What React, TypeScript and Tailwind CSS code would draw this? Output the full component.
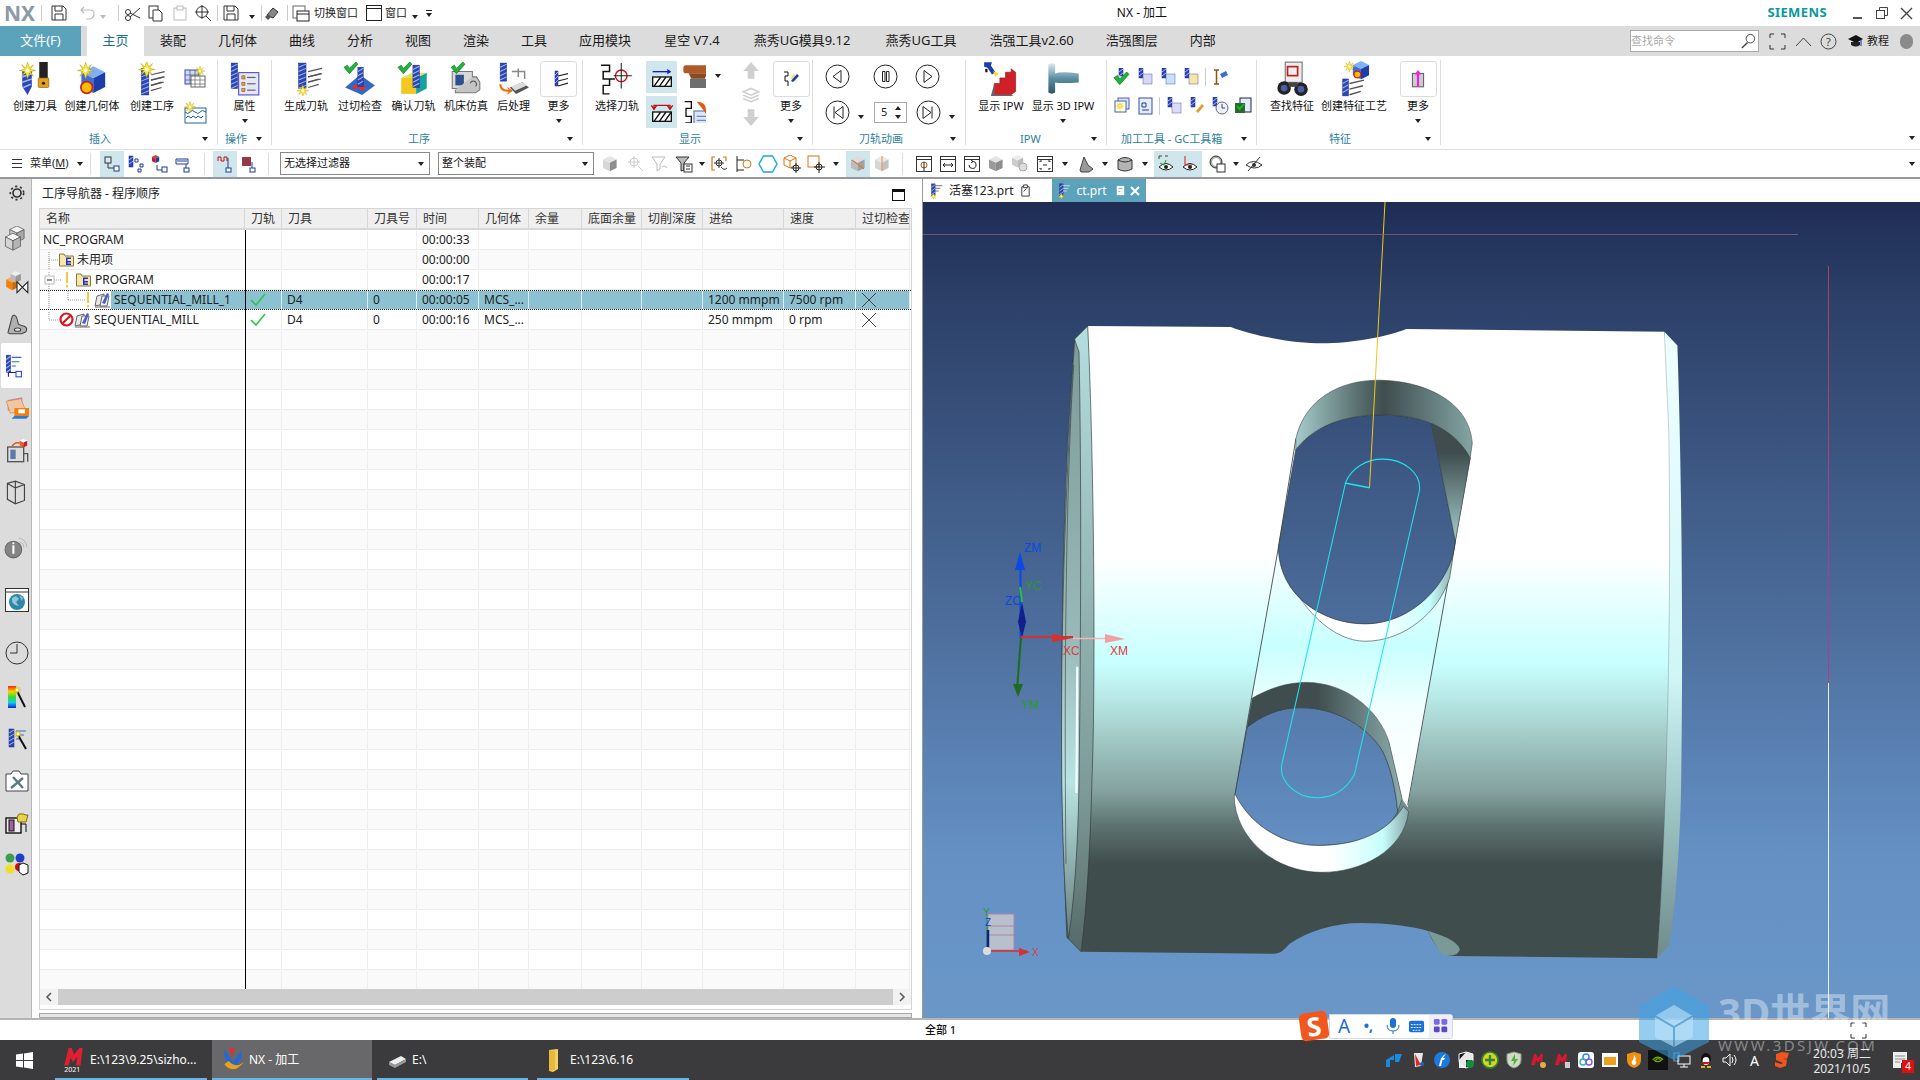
import type { ReactNode } from "react";

// shared bits for the little CAM icons
const S = ({ s = 18, vb = 18, children }: { s?: number; vb?: number; children: ReactNode }) => (
  <svg width={s} height={s} viewBox={`0 0 ${vb} ${vb}`} className="shrink-0">{children}</svg>
);
const Mill = ({ x = 0, y = 0, w = 6, h = 24 }) => (
  <g>
    <rect x={x} y={y} width={w} height={h} fill="#2c46b4" stroke="#1c2c80" strokeWidth=".5" />
    {Array.from({ length: Math.floor(h / 4) }).map((_, i) => (
      <line key={i} x1={x} y1={y + i * 4 + 4} x2={x + w} y2={y + i * 4 + 1} stroke="#9db8f2" strokeWidth="1" />
    ))}
  </g>
);
const Burst = ({ x = 0, y = 0, k = 1 }) => (
  <g transform={`translate(${x} ${y}) scale(${k})`}>
    <polygon points="0,-7 1.6,-2.2 5,-5 2.4,-1 7,0 2.4,1 5,5 1.6,2.2 0,7 -1.6,2.2 -5,5 -2.4,1 -7,0 -2.4,-1 -5,-5 -1.6,-2.2" fill="#ffe93a" stroke="#a89000" strokeWidth=".4" />
    <circle r="1.5" fill="#fff" />
  </g>
);
const Chk = ({ x = 0, y = 0, k = 1 }) => (
  <path transform={`translate(${x} ${y}) scale(${k})`} d="M0 5 L3 3 L5 6 L11 0 L13 2 L5 11 Z" fill="#1fb53a" stroke="#0a6a1c" strokeWidth=".6" />
);
const Rows = ({ x = 0, y = 0, c = "#555" }) => (
  <g stroke={c} strokeWidth="1.2" fill="none">
    <path d={`M${x} ${y + 3} L${x + 13} ${y}`} />
    <path d={`M${x} ${y + 8} L${x + 12} ${y + 5}`} />
    <path d={`M${x} ${y + 13} L${x + 10} ${y + 10}`} />
  </g>
);
const Cube = ({ x = 0, y = 0, k = 1, a = "#7fa8f0", b = "#3f63c8", c = "#1f3a98", st = "none" }) => (
  <g transform={`translate(${x} ${y}) scale(${k})`} stroke={st} strokeWidth=".8">
    <polygon points="0,4 8,0 16,4 8,8" fill={a} />
    <polygon points="0,4 8,8 8,18 0,14" fill={b} />
    <polygon points="16,4 8,8 8,18 16,14" fill={c} />
  </g>
);
const Win = ({ s = 18, children }: { s?: number; children?: ReactNode }) => (
  <S s={s}>
    <rect x="1.5" y="1.5" width="15" height="15" fill="#fff" stroke="#333" strokeWidth="1" />
    <line x1="1.5" y1="4.5" x2="16.5" y2="4.5" stroke="#333" />
    {children}
  </S>
);
const Grey = ({ c = "#b8b8b8" }: { c?: string }) => (
  <S><Cube x={2} y={1} k={.85} a="#e4e4e4" b={c} c="#8e8e8e" /></S>
);

// ribbon: big icons
const CreateTool = () => (
  <S s={34} vb={32}>
    <rect x="20" y="0" width="8" height="15" fill="#222" />
    <rect x="19" y="15" width="10" height="9" rx="1" fill="#e8a018" stroke="#6a4a00" strokeWidth=".5" />
    <circle cx="24" cy="20" r="1.5" fill="#222" />
    <path d="M4 8h9v15l-4 8-5-8z" fill="#2c46b4" />
    <path d="M4 14l9-3M4 19l9-3M5 24l7-3" stroke="#9db8f2" strokeWidth="1.5" />
    <Burst x={9} y={8} k={1.1} />
  </S>
);
const CreateGeo = () => (
  <S s={34} vb={32}>
    <Cube x={6} y={4} k={1.4} a="#7fb0f8" b="#3e6ed8" c="#1d3ea8" />
    <circle cx="11" cy="24" r="5.5" fill="#f5c000" stroke="#d02020" strokeWidth="1.6" />
    <Burst x={10} y={8} k={1.1} />
  </S>
);
const CreateOp = () => (
  <S s={34} vb={32}>
    <Mill x={6} y={6} w={7} h={25} />
    <Rows x={15} y={9} /><Rows x={15} y={14} />
    <Burst x={11} y={7} k={1.1} />
  </S>
);
const Props = () => (
  <S s={34} vb={32}>
    <Mill x={3} y={1} w={6} h={24} />
    <rect x="10" y="10" width="19" height="21" fill="#e6e6fb" stroke="#4a4ac8" />
    {[13, 19, 25].map((y) => (
      <g key={y}>
        <rect x="13" y={y} width="3" height="3" fill="#f0a000" stroke="#444" strokeWidth=".4" />
        <line x1="18" y1={y + 1.5} x2="26" y2={y + 1.5} stroke="#555" />
      </g>
    ))}
  </S>
);
const GenPath = () => (
  <S s={34} vb={32}>
    <Mill x={9} y={1} w={7} h={24} />
    <Rows x={18} y={6} /><Rows x={18} y={11} />
    <Burst x={13} y={27} k={.8} />
  </S>
);
const Gouge = () => (
  <S s={34} vb={32}>
    <path d="M2 24 L16 12 L30 22 L18 31 Z" fill="#3468c8" />
    <path d="M8 24 Q16 18 22 24 L18 27 Q14 23 11 26Z" fill="#e03030" />
    <Mill x={14} y={5} w={5} h={18} />
    <Chk x={1} y={0} k={1} />
  </S>
);
const Verify = () => (
  <S s={34} vb={32}>
    <polygon points="4,15 18,15 18,30 4,30" fill="#f0c820" />
    <polygon points="18,15 28,10 28,25 18,30" fill="#18a0a0" />
    <polygon points="4,15 14,10 28,10 18,15" fill="#e0e060" />
    <Mill x={15} y={3} w={6} h={21} />
    <Chk x={1} y={0} k={1} />
  </S>
);
const Machine = () => (
  <S s={34} vb={32}>
    <path d="M3 9 H22 V25 H3Z" fill="#d8d8d8" stroke="#777" />
    <rect x="6" y="12" width="8" height="10" fill="#2f4f8f" />
    <path d="M22 14h4l3 5v7l-4 3H6v-3" fill="#c4c4c4" stroke="#777" />
    <path d="M20 20a3 3 0 1 1 5 3" stroke="#555" fill="none" />
    <Chk x={2} y={0} k={1} />
  </S>
);
const Post = () => (
  <S s={34} vb={32}>
    <Mill x={3} y={1} w={6} h={17} />
    <path d="M14 9h12v7M20 6v8" stroke="#888" fill="none" strokeWidth="1.4" />
    <polygon points="12,24 24,19 30,24 18,30" fill="#555" />
    <polygon points="13,23 24,19 28,22 17,27" fill="#ddd" />
    <path d="M4 21 Q5 27 11 26 L9 23 L15 27 L9 31 L11 28 Q3 29 2 21Z" fill="#f06a10" />
  </S>
);
const MoreBox = ({ children }: { children: ReactNode }) => (
  <span className="flex h-[36px] w-[37px] items-center justify-center rounded-[3px] border border-[#dcdcdc]">{children}</span>
);
const SelPath = () => (
  <S s={34} vb={32}>
    <path d="M1 3H9V9H3V16H9V22H3V30H9M9 16H14" fill="none" stroke="#111" strokeWidth="1.4" />
    <circle cx="20" cy="13" r="5.5" fill="none" stroke="#d01010" strokeWidth="1.3" />
    <path d="M20 1V25M13 13H30" stroke="#222" strokeWidth="1" />
  </S>
);
const ShowIpw = () => (
  <S s={36} vb={32}>
    <path d="M2 10 h2 v-3 h-2z" fill="#111" />
    <path d="M1 1 L8 1 L7 4 L11 10 L8 12 L4 6 L1 5Z" fill="#1a3fa8" />
    <polygon points="9,9 14,11 11,14" fill="#ffd800" />
    <path d="M10 30V20h5v-5h5v-5h5v-3l4 3v17l-4 3Z" fill="#d02028" stroke="#7a1010" strokeWidth=".5" />
    <path d="M7 31 L10 20 V30 H25 L27 31Z" fill="#666" />
  </S>
);
const Show3d = () => (
  <S s={36} vb={32}>
    <path d="M3 3 Q6 1 9 3 V11 Q14 9 30 11 V19 Q14 20 9 19 V28 Q6 30 3 28 Z" fill="url(#steel)" />
    <defs>
      <linearGradient id="steel" x1="0" x2="0" y1="0" y2="1">
        <stop offset="0" stopColor="#dfe8ec" /><stop offset=".5" stopColor="#5b8fa2" /><stop offset="1" stopColor="#2e5566" />
      </linearGradient>
    </defs>
  </S>
);
const Binoc = () => (
  <S s={36} vb={32}>
    <rect x="10" y="1" width="15" height="18" fill="#eee" stroke="#777" />
    <rect x="12" y="5" width="9" height="8" fill="none" stroke="#c02020" strokeWidth="1.5" />
    <circle cx="9" cy="24" r="6" fill="#222" /><circle cx="24" cy="25" r="6" fill="#222" />
    <circle cx="9" cy="24" r="3" fill="#4a5ea8" /><circle cx="24" cy="25" r="3" fill="#4a5ea8" />
    <rect x="13" y="19" width="8" height="4" fill="#444" />
  </S>
);
const CreateFeat = () => (
  <S s={36} vb={32}>
    <Cube x={15} y={0} k={.9} a="#7fb0f8" b="#3e6ed8" c="#1d3ea8" />
    <circle cx="19" cy="12" r="3" fill="#f5c000" stroke="#d02020" />
    <Burst x={12} y={5} k={.7} />
    <Mill x={6} y={16} w={5} h={15} />
    <Rows x={12} y={17} />
  </S>
);

// ribbon: small icons
const MiniMill = ({ k = "#8a8ad8" }: { k?: string }) => (
  <S>
    <Mill x={3} y={0} w={4} h={10} />
    <rect x="7" y="6" width="9" height="10" fill={k} stroke="#5a5ab0" strokeWidth=".5" />
  </S>
);
const MiniChk = () => (
  <S><Mill x={6} y={0} w={4} h={8} /><Chk x={1} y={4} k={1.15} /></S>
);
const SmallGrid = () => (
  <S s={24} vb={24}>
    <rect x="2" y="5" width="14" height="14" fill="#cfd8f0" stroke="#3a4ea8" />
    <path d="M2 10h14M2 15h14M7 5v14M12 5v14" stroke="#3a4ea8" strokeWidth=".7" />
    <rect x="8" y="11" width="14" height="11" fill="#fff" stroke="#666" />
    <path d="M8 15h14M8 19h14M12 11v11M17 11v11" stroke="#666" strokeWidth=".7" />
    <Burst x={17} y={6} k={.7} />
  </S>
);
const SmallWave = () => (
  <S s={24} vb={24}>
    <rect x="2" y="8" width="21" height="15" fill="#fff" stroke="#23669a" />
    <path d="M2 12q3 3 5 0t5 0 5 0 6 0M3 18l2-2 3 2 2-2 3 2 2-2 3 2 2-2" stroke="#1a6090" fill="none" />
    <Burst x={7} y={7} k={.8} />
  </S>
);
const Anim = ({ d }: { d: ReactNode }) => (
  <S s={25} vb={25}>
    <circle cx="12.5" cy="12.5" r="11.5" fill="#fff" stroke="#222" />
    <g fill="none" stroke="#222">{d}</g>
  </S>
);
const Caret = ({ c = "border-t-[#222]" }: { c?: string }) => (
  <span className={`inline-block h-0 w-0 border-x-[3px] border-t-[4px] border-x-transparent ${c}`} />
);

const RBtn = ({ w, icon, label, more }: { w: string; icon: ReactNode; label: string; more?: boolean }) => (
  <div className={`flex ${w} shrink-0 flex-col items-center`}>
    <div className="flex h-[37px] items-center justify-center">{icon}</div>
    <div className="mt-[1px] text-[11px] leading-[16px] whitespace-nowrap text-[#111]">{label}</div>
    {more && <div className="mt-[3px] flex h-[8px] items-center"><Caret /></div>}
  </div>
);

const Group = ({ w, pad, label, lab, children }: { w: string; pad: string; label: string; lab: string; children: ReactNode }) => (
  <div className={`flex ${w} shrink-0 flex-col border-r border-[#dedede] h-[85px]`}>
    <div className={`flex h-[71px] shrink-0 ${pad}`}>{children}</div>
    <div className={`flex h-[16px] shrink-0 items-center text-[11px] leading-[16px] text-[#2d7f9e] ${lab}`}>
      <span className="whitespace-nowrap">{label}</span>
      <span className="ml-auto mr-[9px] flex items-center"><Caret /></span>
    </div>
  </div>
);

const Ribbon = () => (
  <div className="flex h-[94px] shrink-0 items-start bg-white pt-[4px] border-b border-[#dedede]">
    <Group w="w-[218px]" pad="pl-[8px]" label="插入" lab="pl-[89px]">
      <RBtn w="w-[54px]" icon={<CreateTool />} label="创建刀具" />
      <RBtn w="w-[60px]" icon={<CreateGeo />} label="创建几何体" />
      <RBtn w="w-[60px]" icon={<CreateOp />} label="创建工序" />
      <div className="flex w-[25px] flex-col items-center gap-[11px] pt-[5px]"><SmallGrid /><SmallWave /></div>
    </Group>
    <Group w="w-[54px]" pad="" label="操作" lab="pl-[7px]">
      <RBtn w="w-full" icon={<Props />} label="属性" more />
    </Group>
    <Group w="w-[311px]" pad="pl-[7px]" label="工序" lab="pl-[136px]">
      <RBtn w="w-[54px]" icon={<GenPath />} label="生成刀轨" />
      <RBtn w="w-[54px]" icon={<Gouge />} label="过切检查" />
      <RBtn w="w-[53px]" icon={<Verify />} label="确认刀轨" />
      <RBtn w="w-[52px]" icon={<Machine />} label="机床仿真" />
      <RBtn w="w-[43px]" icon={<Post />} label="后处理" />
      <RBtn w="w-[47px]" icon={<MoreBox><S><Mill x={5} y={1} w={3} h={15} /><Rows x={8} y={3} c="#222" /></S></MoreBox>} label="更多" more />
    </Group>
    <Group w="w-[230px]" pad="pl-[7px]" label="显示" lab="pl-[96px]">
      <RBtn w="w-[54px]" icon={<SelPath />} label="选择刀轨" />
      <div className="ml-[2px] flex w-[31px] shrink-0 flex-col gap-[3px] pt-[1px]">
        <span className="flex h-[32px] items-center justify-center bg-[#cfe6ec]"><S s={24}><path d="M2 5h13" stroke="#1a1ad0" strokeWidth="1" /><path d="M13 3l3 2-3 2z" fill="#1a1ad0" /><rect x="2" y="9" width="14" height="7" fill="#fff" stroke="#111" /><path d="M3 16l5-7M7 16l5-7M11 16l5-7" stroke="#111" /></S></span>
        <span className="flex h-[32px] items-center justify-center bg-[#cfe6ec]"><S s={24}><path d="M3 6V4h12v2M1 4l2 3 2-3M13 4l2 3 2-3" stroke="#c01010" fill="none" /><rect x="2" y="9" width="14" height="7" fill="#fff" stroke="#111" /><path d="M3 16l5-7M7 16l5-7M11 16l5-7" stroke="#111" /></S></span>
      </div>
      <div className="ml-[5px] flex w-[38px] shrink-0 flex-col pt-[4px]">
        <span className="flex items-center gap-[9px]"><S s={24}><rect x="1" y="1" width="22" height="6" rx="2" fill="#b05a28" /><path d="M5 7h14l-2 4H7z" fill="#8a4a20" /><rect x="6" y="11" width="12" height="9" fill="#6e6e6e" /><rect x="6" y="20" width="12" height="3" fill="#f0c800" /></S><Caret /></span>
        <span className="mt-[11px]"><S s={24}><path d="M2 2H7V7H3V13H7V18H3V23" fill="none" stroke="#111" /><rect x="9" y="9" width="12" height="14" fill="#dce6f6" stroke="#6a8ac0" /><path d="M11 13h8M11 16h8M11 19h8" stroke="#6a8ac0" /><path d="M11 2q7 0 7 6l2-2-2 5-3-4z" fill="#e05a10" /></S></span>
      </div>
      <div className="ml-[20px] flex w-[22px] shrink-0 flex-col items-center gap-[3px] pt-[1px]">
        <S s={20}><path d="M9 1l7 8h-4v7H6V9H2z" fill="#cfcfcf" /></S>
        <S s={20}><path d="M9 4l7 3-7 3-7-3zM2 10l7 3 7-3M2 13l7 3 7-3" fill="none" stroke="#cfcfcf" strokeWidth="1.4" /></S>
        <S s={20}><path d="M9 17l7-8h-4V2H6v7H2z" fill="#cfcfcf" /></S>
      </div>
      <div className="ml-[7px] shrink-0"><RBtn w="w-[44px]" icon={<MoreBox><S><path d="M2 2H6V6H3V11H6V16" fill="none" stroke="#111" /><Burst x={12} y={8} k={.5} /><path d="M9 11 L15 4 L17 6 L11 12Z" fill="#1a3fa8" /></S></MoreBox>} label="更多" more /></div>
    </Group>
    <Group w="w-[153px]" pad="pl-[12px]" label="刀轨动画" lab="pl-[46px]">
      <div className="flex w-full flex-col gap-[11px] pt-[4px]">
        <div className="flex items-center">
          <Anim d={<path d="M16 6.5 L8 12.5 L16 18.5Z" />} />
          <span className="ml-[23px]"><Anim d={<path d="M9.5 7.5H12V17.5H9.5ZM13.5 7.5H16V17.5H13.5Z" />} /></span>
          <span className="ml-[17px]"><Anim d={<path d="M9 6.5 L17 12.5 L9 18.5Z" />} /></span>
        </div>
        <div className="flex items-center">
          <Anim d={<path d="M9 6.5V18.5M18 6.5 L10 12.5 L18 18.5Z" />} />
          <span className="ml-[8px] mr-[10px]"><Caret /></span>
          <span className="flex h-[21px] w-[33px] items-center justify-between border border-[#aaa] pl-[6px] pr-[5px] text-[11px]">5<span className="flex flex-col gap-[5px]"><span className="block h-0 w-0 border-x-[3px] border-b-[4px] border-x-transparent border-b-[#222]" /><Caret /></span></span>
          <span className="ml-[9px]"><Anim d={<path d="M16 6.5V18.5M7 6.5 L15 12.5 L7 18.5Z" />} /></span>
          <span className="ml-[8px]"><Caret /></span>
        </div>
      </div>
    </Group>
    <Group w="w-[141px]" pad="pl-[11px]" label="IPW" lab="pl-[54px]">
      <RBtn w="w-[48px]" icon={<ShowIpw />} label="显示 IPW" />
      <RBtn w="w-[76px]" icon={<Show3d />} label="显示 3D IPW" more />
    </Group>
    <Group w="w-[150px]" pad="pl-[6px]" label="加工工具 - GC工具箱" lab="pl-[14px]">
      <div className="flex w-full flex-col gap-[11px] pt-[8px]">
        <div className="flex items-center gap-[5px]">
          <MiniChk /><MiniMill k="#d8d8f4" /><MiniMill k="#c8e0f8" /><MiniMill k="#f2e8a8" />
          <span className="h-[18px] w-px bg-[#ccc]" />
          <S><path d="M3 2h5M3 16h5M5.5 2v14" stroke="#8a5a10" strokeWidth="1.5" /><path d="M9 6l6-3 2 4-6 3z" fill="#3e6ed8" /></S>
        </div>
        <div className="flex items-center gap-[5px]">
          <S><rect x="5" y="1" width="11" height="11" fill="#dce6f6" stroke="#4a5ec0" /><rect x="2" y="4" width="11" height="11" fill="#ffffd0" stroke="#4a5ec0" /><Burst x={7} y={9} k={.5} /></S>
          <S><rect x="3" y="1" width="13" height="16" fill="#e6eefa" stroke="#3a4ea8" /><path d="M6 6h4v4H6zM6 13h7" stroke="#1f3a98" fill="none" /></S>
          <span className="h-[18px] w-px bg-[#ccc]" />
          <MiniMill k="#dcdcf6" />
          <S><Mill x={3} y={0} w={4} h={10} /><path d="M8 14l6-7 2 2-6 7z" fill="#e0a020" /></S>
          <S><Mill x={2} y={0} w={4} h={9} /><circle cx="11" cy="11" r="6" fill="#eef" stroke="#667" /><path d="M11 7v4h3" stroke="#445" fill="none" /></S>
          <S><rect x="6" y="1" width="11" height="14" fill="#e0ecfa" stroke="#224" /><rect x="1" y="6" width="10" height="10" fill="#2a6a30" /><Chk x={2} y={6} k={.7} /></S>
        </div>
      </div>
    </Group>
    <Group w="w-[184px]" pad="pl-[8px]" label="特征" lab="pl-[72px]">
      <RBtn w="w-[54px]" icon={<Binoc />} label="查找特征" />
      <RBtn w="w-[70px]" icon={<CreateFeat />} label="创建特征工艺" />
      <div className="ml-[10px]"><RBtn w="w-[38px]" icon={<MoreBox><S s={20}><rect x="4" y="4" width="10" height="12" fill="#ccc" stroke="#666" /><path d="M9 1l3 4h-2v11H8V5H6z" fill="#f020e0" /></S></MoreBox>} label="更多" more /></div>
    </Group>
    <div className="ml-auto flex h-[85px] items-end pb-[5px] pr-[5px]"><Caret /></div>
  </div>
);

const tabs = [
  { t: "装配", c: "px-[16px]" }, { t: "几何体", c: "px-[16px]" }, { t: "曲线", c: "px-[16px]" }, { t: "分析", c: "px-[16px]" },
  { t: "视图", c: "px-[16px]" }, { t: "渲染", c: "px-[16px]" }, { t: "工具", c: "px-[16px]" }, { t: "应用模块", c: "px-[16px]" },
  { t: "星空 V7.4", c: "pl-[17px] pr-[16px]" }, { t: "燕秀UG模具9.12", c: "px-[18px]" }, { t: "燕秀UG工具", c: "px-[17px]" },
  { t: "浩强工具v2.60", c: "px-[16px]" }, { t: "浩强图层", c: "px-[16px]" }, { t: "内部", c: "px-[16px]" },
];

const TitleBar = () => (
  <div className="flex h-[26px] shrink-0 items-center bg-white">
    <span className="ml-[4px] w-[34px] text-[21px] leading-[26px] font-bold text-[#8b9aa8]">NX</span>
    <span className="mx-[3px] h-[16px] w-px bg-[#ccc]" />
    <span className="ml-[5px]"><S><path d="M2 2H13L16 5V16H2Z" fill="none" stroke="#333" /><path d="M5 2V7H12V2M5 16V10H13V16" fill="none" stroke="#333" /></S></span>
    <span className="ml-[11px]"><S><path d="M5 3L2 6 5 9M2 6H11Q15 6 15 10T11 15H7" fill="none" stroke="#bbb" strokeWidth="1.2" /></S></span>
    <span className="ml-[3px]"><Caret c="border-t-[#bbb]" /></span>
    <span className="ml-[12px] mr-[5px] h-[16px] w-px bg-[#ccc]" />
    <S><circle cx="4" cy="14" r="2.5" fill="none" stroke="#333" /><circle cx="4" cy="8" r="2.5" fill="none" stroke="#333" /><path d="M6 13L16 4M6 9L16 14" stroke="#333" /></S>
    <span className="ml-[5px]"><S><rect x="2" y="2" width="9" height="12" fill="#fff" stroke="#333" /><path d="M6 6h6l3 3v8H6z" fill="#fff" stroke="#333" /></S></span>
    <span className="ml-[6px]"><S><rect x="3" y="4" width="12" height="12" fill="none" stroke="#bbb" /><rect x="6" y="2" width="6" height="4" fill="#fff" stroke="#bbb" /></S></span>
    <span className="ml-[5px]"><S><circle cx="8" cy="8" r="5.5" fill="none" stroke="#333" /><path d="M8 1v14M1 8h14M12 12l5 5" stroke="#333" /></S></span>
    <span className="ml-[5px] mr-[4px] h-[16px] w-px bg-[#ccc]" />
    <S><path d="M2 2H13L16 5V16H2Z" fill="none" stroke="#333" /><path d="M5 2V7H12V2M5 16V10H13V16" fill="none" stroke="#333" /></S>
    <span className="ml-[9px]"><Caret /></span>
    <span className="ml-[6px] mr-[2px] h-[16px] w-px bg-[#ccc]" />
    <S><path d="M3 11l6-7 5 4-5 6z" fill="#888" stroke="#333" /><path d="M1 13l3-3 3 3-3 3z" fill="#555" /></S>
    <span className="ml-[5px] mr-[4px] h-[16px] w-px bg-[#ccc]" />
    <S><rect x="1" y="2" width="12" height="12" fill="#fff" stroke="#666" /><rect x="5" y="7" width="12" height="10" fill="#fff" stroke="#222" /><line x1="5" y1="10" x2="17" y2="10" stroke="#222" /></S>
    <span className="ml-[4px] text-[11px] whitespace-nowrap">切换窗口</span>
    <span className="ml-[7px]"><S><rect x="1.5" y="1.5" width="15" height="15" fill="#fff" stroke="#222" /><line x1="1.5" y1="4.5" x2="16.5" y2="4.5" stroke="#222" /></S></span>
    <span className="ml-[2px] text-[11px] whitespace-nowrap">窗口</span>
    <span className="ml-[5px]"><Caret /></span>
    <span className="ml-[8px] flex flex-col gap-[2px]"><span className="h-px w-[6px] bg-[#222]" /><Caret /></span>
    <span className="ml-[650px] w-[120px] text-center text-[12px] whitespace-nowrap text-[#111]">NX - 加工</span>
    <span className="ml-auto text-[13px] font-bold tracking-[.4px] text-[#0a9a9a]">SIEMENS</span>
    <span className="ml-[26px] mt-[10px] h-[2px] w-[9px] bg-[#555]" />
    <span className="ml-[13px]"><S s={14} vb={14}><rect x="1.5" y="4.5" width="8" height="8" fill="none" stroke="#444" /><path d="M4.5 4.5V1.5H12.5V9.5H9.5" fill="none" stroke="#444" /></S></span>
    <span className="ml-[10px] mr-[6px]"><S s={15} vb={15}><path d="M2 2L13 13M13 2L2 13" stroke="#444" strokeWidth="1.4" /></S></span>
  </div>
);

const TabBar = () => (
  <div className="flex h-[30px] shrink-0 items-center bg-[#dcdcdc] text-[13px] text-[#1a1a1a]">
    <div className="flex h-full w-[81px] items-center justify-center bg-[#5ba3bb] text-white">文件(F)</div>
    <div className="ml-[6px] flex h-full w-[57px] items-center justify-center bg-white text-[#1a6f8c]">主页</div>
    {tabs.map((t) => <div key={t.t} className={`${t.c} whitespace-nowrap`}>{t.t}</div>)}
    <div className="ml-auto flex h-[22px] w-[129px] items-center border border-[#aaa] bg-white text-[11px] text-[#aaa]">
      <span className="flex-1">查找命令</span>
      <span className="pr-[1px]"><S s={17}><circle cx="11" cy="6" r="4.5" fill="none" stroke="#444" /><path d="M8 10L2 16" stroke="#444" strokeWidth="1.5" /></S></span>
    </div>
    <span className="ml-[10px]"><S s={17} vb={17}><path d="M1 5V1H5M12 1H16V5M16 12V16H12M5 16H1V12" fill="none" stroke="#333" /></S></span>
    <span className="ml-[9px]"><S s={17} vb={17}><path d="M1 13L8.5 5 16 13" fill="none" stroke="#444" /></S></span>
    <span className="ml-[8px]"><S s={17} vb={17}><circle cx="8.5" cy="8.5" r="7.5" fill="none" stroke="#444" /><text x="8.5" y="12.5" fontSize="11" textAnchor="middle" fill="#444">?</text></S></span>
    <span className="ml-[10px]"><S s={17} vb={17}><path d="M1 6L9 2 16 6 9 10Z" fill="#111" /><path d="M4 9V12Q9 15 13 12V9" fill="#222" /><path d="M14 7V13" stroke="#1a2fd0" /></S></span>
    <span className="ml-[3px] text-[11px]">教程</span>
    <span className="ml-[11px] mr-[7px] h-[15px] w-[13px] rounded-full bg-[#8a8a8a]" />
  </div>
);

const Hl = ({ children, on }: { children: ReactNode; on?: boolean }) => (
  <span className={`flex h-[26px] w-[24px] shrink-0 items-center justify-center ${on ? "bg-[#cfe6ec]" : ""}`}>{children}</span>
);
const Vs = () => <span className="mx-[7px] h-[22px] w-px shrink-0 bg-[#dcdcdc]" />;
const Tc = () => <span className="flex w-[16px] shrink-0 justify-center"><Caret /></span>;
const Tree = ({ a = "#333", b = "#1f3a98" }: { a?: string; b?: string }) => (
  <S><path d="M5 8v5h7" fill="none" stroke="#333" /><rect x="2" y="2" width="6" height="6" fill="#dbe5fa" stroke={a} /><rect x="11" y="11" width="5" height="5" fill="#fff" stroke={b} /></S>
);
const Select = ({ w, label }: { w: string; label: string }) => (
  <div className={`flex h-[23px] ${w} shrink-0 items-center justify-between border border-[#888] pl-[3px] pr-[5px] text-[11px] text-[#111]`}>
    <span>{label}</span><Caret />
  </div>
);

const ToolBar = () => (
  <div className="flex h-[29px] shrink-0 items-center border-b-2 border-[#96999c] bg-white pl-[12px]">
    <span className="flex w-[10px] flex-col gap-[3px]"><span className="h-px bg-[#333]" /><span className="h-px bg-[#333]" /><span className="h-px bg-[#333]" /></span>
    <span className="ml-[8px] w-[42px] text-[11px] whitespace-nowrap">菜单(<span className="underline">M</span>)</span>
    <span className="ml-[5px] flex"><Caret /></span>
    <span className="ml-[7px] mr-[9px] h-[22px] w-px bg-[#dcdcdc]" />
    <Hl on><Tree /></Hl><Hl><S><Mill x={2} y={1} w={4} h={11} /><path d="M8 4h3v3H8zM13 9h3v3h-3zM11 14h3v3h-3z" fill="#fff" stroke="#1f3a98" /></S></Hl>
    <Hl><S><Cube x={1} y={0} k={.45} a="#d04040" b="#c02020" c="#1d3ea8" /><path d="M6 10v5h5" fill="none" stroke="#1f3a98" /><rect x="11" y="12" width="5" height="5" fill="#fff" stroke="#1f3a98" /></S></Hl>
    <Hl><S><path d="M1 4h12v5H1z" fill="none" stroke="#1f3a98" /><path d="M2 6h10" stroke="#1f3a98" /><path d="M11 9v6" stroke="#1f3a98" /><rect x="9" y="13" width="5" height="4" fill="#fff" stroke="#1f3a98" /></S></Hl>
    <span className="ml-[8px] mr-[8px] h-[22px] w-px shrink-0 bg-[#dcdcdc]" />
    <Hl on><S><path d="M2 6V2h3v4h3V2h3v4" fill="none" stroke="#c01010" /><path d="M12 3v11" stroke="#1f3a98" /><rect x="10" y="13" width="5" height="4" fill="#fff" stroke="#1f3a98" /></S></Hl>
    <Hl><S><rect x="2" y="2" width="9" height="9" fill="#a83040" /><path d="M2 5h9M2 8h9M5 2v9M8 2v9" stroke="#555" strokeWidth=".5" /><path d="M12 7v8" stroke="#1f3a98" /><rect x="10" y="13" width="5" height="4" fill="#fff" stroke="#1f3a98" /></S></Hl>
    <Vs />
    <span className="ml-[4px]"><Select w="w-[150px]" label="无选择过滤器" /></span>
    <span className="ml-[8px]"><Select w="w-[156px]" label="整个装配" /></span>
    <span className="ml-[4px] flex items-center">
      <Hl><Grey c="#d8d8d8" /></Hl>
      <span className="w-[2px]" />
      <Hl><S><circle cx="7" cy="7" r="4" fill="none" stroke="#ccc" /><path d="M7 1v12M1 7h12M11 11l5 5" stroke="#ccc" /></S></Hl>
      <Hl><S><path d="M1 2h13L9 9v5l-3 2V9z" fill="none" stroke="#bbb" /><path d="M11 12a3 3 0 0 1 5 1" stroke="#bbb" fill="none" /></S></Hl>
      <Hl><S><path d="M1 2h13L9 8v7l-3 1V8z" fill="#bbb" stroke="#333" /><rect x="9" y="9" width="8" height="8" fill="#fff" stroke="#333" /><path d="M11 11h4M11 14h4" stroke="#333" /></S></Hl>
      <span className="flex w-[12px] shrink-0 justify-center"><Caret /></span>
      <Hl><S><path d="M4 2H1V15H4M12 2H15V6" fill="none" stroke="#e07010" strokeWidth="1.2" /><circle cx="8" cy="8" r="3" fill="none" stroke="#333" /><path d="M8 3v10M3 8h10M10 12q3 4 6 1" stroke="#333" fill="none" /></S></Hl>
      <Hl><S><path d="M2 1v16M2 5h7M2 15h7" stroke="#222" /><circle cx="12" cy="9" r="4" fill="none" stroke="#e07010" /></S></Hl>
      <Hl><S s={20} vb={20}><polygon points="5.5,2 14.5,2 19,10 14.5,18 5.5,18 1,10" fill="none" stroke="#1aa8d8" strokeWidth="1.4" /></S></Hl>
      <Hl><S><Cube x={1} y={0} k={.7} a="#fff" b="#fff" c="#fff" /><path d="M1 3L7 0l6 3v7l-6 3-6-3zM7 6v7M1 3l6 3 6-3" fill="none" stroke="#e07010" /><circle cx="13" cy="13" r="3" fill="none" stroke="#222" /><path d="M13 8v10M8 13h10" stroke="#222" /></S></Hl>
      <Hl><S><rect x="1" y="1" width="11" height="11" fill="none" stroke="#e07010" /><circle cx="12" cy="12" r="3" fill="none" stroke="#222" /><path d="M12 7v11M7 12h11" stroke="#222" /></S></Hl>
      <Tc />
      <span className="w-[2px]" />
      <Hl on><S><Cube x={2} y={1} k={.85} a="#dcdcdc" b="#bcbcbc" c="#a0a0a0" /><path d="M3 5L15 14" stroke="#e07010" /></S></Hl>
      <Hl><S><Cube x={2} y={1} k={.85} a="#e8e8e8" b="#d6d6d6" c="#c2c2c2" /><path d="M9 1v15" stroke="#e89050" /></S></Hl>
      <span className="ml-[8px] mr-[9px] h-[22px] w-px bg-[#dcdcdc]" />
      <Hl><Win><circle cx="9" cy="10" r="3" fill="none" stroke="#c05010" /><path d="M9 7v9" stroke="#222" /></Win></Hl>
      <Hl><Win><path d="M4 10h10M4 10l2-2M4 10l2 2M14 10l-2-2M14 10l-2 2" stroke="#222" fill="none" /></Win></Hl>
      <Hl><Win><path d="M6 10a3.5 3.5 0 1 0 3-3.5M8 5l2 1.5L8 8" fill="none" stroke="#222" /></Win></Hl>
      <Hl><Grey c="#9a9a9a" /></Hl>
      <Hl><S><Cube x={1} y={0} k={.7} a="#eee" b="#ccc" c="#bbb" /><circle cx="12" cy="12" r="4" fill="#ddd" stroke="#aaa" /></S></Hl>
      <span className="w-[1px]" />
      <Hl><Win><path d="M4 7V6h2M14 7V6h-2M4 13v1h2M14 13v1h-2M7 10h4" stroke="#222" fill="none" /></Win></Hl>
      <Tc />
      <Hl><S><path d="M4 15L8 2l4 8 5 4-4 3H5z" fill="#999" stroke="#444" /></S></Hl>
      <Tc />
      <Hl><S><path d="M2 5Q9 0 16 5V14Q9 18 2 14Z" fill="#b4b4b4" stroke="#333" /><path d="M2 5Q9 9 16 5" fill="none" stroke="#333" /></S></Hl>
      <Tc />
      <span className="w-[1px]" />
      <Hl on><S><path d="M2 4V1h3M8 1h3" stroke="#444" fill="none" /><path d="M2 12q7-7 14 0q-7 6-14 0" fill="#fff" stroke="#222" /><circle cx="9" cy="12" r="2" fill="#222" /><path d="M3 8l4 2 2-5" stroke="#1aa030" fill="none" /></S></Hl>
      <Hl on><S><path d="M2 12q7-7 14 0q-7 6-14 0" fill="#fff" stroke="#222" /><circle cx="9" cy="12" r="2" fill="#222" /><path d="M4 1v9h7" stroke="#d02020" fill="none" /></S></Hl>
      <span className="w-[3px]" />
      <Hl><S><circle cx="8" cy="7" r="6" fill="#aaa" stroke="#333" /><path d="M8 3a4 4 0 1 0 .1 0" fill="#fff" /><rect x="9" y="9" width="8" height="8" fill="#fff" stroke="#333" /></S></Hl>
      <span className="flex w-[13px] shrink-0 justify-center"><Caret /></span>
      <Hl><S><path d="M3 16L15 2" stroke="#333" /><path d="M1 10q7-7 16 0q-7 6-16 0" fill="none" stroke="#333" /><circle cx="9" cy="10" r="2" fill="#333" /></S></Hl>
    </span>
    <span className="ml-auto mr-[5px] flex"><Caret /></span>
  </div>
);

const railTop = [
  { mt: "mt-[4px]", i: <S s={20}><circle cx="9" cy="9" r="3.6" fill="none" stroke="#333" strokeWidth="1.5" /><circle cx="9" cy="9" r="6" fill="none" stroke="#333" strokeWidth="1.5" strokeDasharray="2 2.4" /></S> },
  { mt: "mt-[23px]", i: <S s={26}><Cube x={4} y={0} k={.62} a="#f4f4f4" b="#c8c8c8" c="#a8a8a8" st="#555" /><Cube x={1} y={5} k={.65} a="#f4f4f4" b="#d4d4d4" c="#b4b4b4" st="#555" /></S> },
  { mt: "mt-[18px]", i: <S s={26} vb={24}><Cube x={2} y={6} k={.7} a="#ffa84a" b="#f08010" c="#d06a00" /><Cube x={6} y={1} k={.6} a="#eee" b="#bbb" c="#999" /><path d="M12 11l10 10V11L12 21Z" fill="#fff" stroke="#222" /></S> },
  { mt: "mt-[17px]", i: <S s={25} vb={24}><path d="M4 18L8 3q2-2 4 1l2 7 6 2q3 2 1 5l-4 2H6q-3-1-2-2z" fill="#b0b0b0" stroke="#444" /><ellipse cx="13" cy="16" rx="3" ry="1.6" fill="#eee" stroke="#444" /></S> },
];
const railBottom = [
  { mt: "mt-[8px]", i: <S s={24}><path d="M2 3l11-2v8l-11 2z" fill="#b08ad8" /><path d="M1 4l11-2 3 8-11 3z" fill="#f0c8a0" stroke="#e0802a" strokeWidth=".5" /><rect x="7" y="9" width="11" height="6" fill="#f08010" /><rect x="10" y="10" width="5" height="3" fill="#fff" /><path d="M7 15h11l-2 2H5z" fill="#2b7ad8" /></S> },
  { mt: "mt-[19px]", i: <S s={24}><rect x="2" y="6" width="12" height="11" fill="#ddd" stroke="#555" /><rect x="4" y="8" width="4" height="7" fill="#5a7ab0" /><path d="M14 11h3v6" stroke="#555" fill="none" /><Cube x={11} y={0} k={.35} a="#fff" b="#f05a20" c="#c02020" /><path d="M5 6q2-4 6-3" stroke="#e05a10" fill="none" /></S> },
  { mt: "mt-[17px]", i: <S s={25} vb={22}><path d="M3 3l7-2 8 3v14l-8 3-7-4zM10 1v6M10 21V7l8-3M3 3l7 4" fill="none" stroke="#444" /></S> },
  { mt: "mt-[31px]", i: <S s={25} vb={24}><path d="M14 2a9 9 0 0 1 8 9M15 6a5 5 0 0 1 4 5" stroke="#bbb" fill="none" /><circle cx="9" cy="13" r="8" fill="#858585" stroke="#666" /><path d="M9 9v8" stroke="#fff" strokeWidth="2" /><circle cx="9" cy="7" r="1" fill="#fff" /></S> },
  { mt: "mt-[27px]", i: <S s={24} vb={24}><rect x="0.5" y="0.5" width="23" height="23" fill="#fff" stroke="#333" /><line x1="0.5" y1="4" x2="23.5" y2="4" stroke="#333" /><circle cx="12" cy="14" r="8" fill="#2e86a8" /><path d="M7 10l4-2 3 3-3 3 3 4-4-1-3-3zM14 7l4 3-1 3z" fill="#8cc8d8" /></S> },
  { mt: "mt-[29px]", i: <S s={24} vb={24}><circle cx="12" cy="12" r="11" fill="none" stroke="#333" /><path d="M12 3v9H5" fill="none" stroke="#333" /></S> },
  { mt: "mt-[20px]", i: <S s={24} vb={24}><defs><linearGradient id="rb" x1="0" x2="0" y1="0" y2="1"><stop offset="0" stopColor="#ff2010" /><stop offset=".25" stopColor="#ffd000" /><stop offset=".5" stopColor="#30e030" /><stop offset=".75" stopColor="#10d0e0" /><stop offset="1" stopColor="#1020e0" /></linearGradient></defs><rect x="3" y="1" width="8" height="22" fill="url(#rb)" /><path d="M12 6l8 16" stroke="#111" strokeWidth="2" /><Burst x={12} y={5} k={.6} /></S> },
  { mt: "mt-[18px]", i: <S s={24} vb={24}><Mill x={4} y={2} w={5} h={18} /><path d="M11 4h10M11 8h8M11 12h5" stroke="#2b6ad8" /><path d="M13 8l8 14" stroke="#111" strokeWidth="2" /><Burst x={13} y={7} k={.6} /></S> },
  { mt: "mt-[18px]", i: <S s={24} vb={24}><path d="M1 5h5l2-3h6l2 3h7v17H1z" fill="#fff" stroke="#444" /><path d="M6 19L18 9M8 8l10 11" stroke="#5a7a80" strokeWidth="2.4" /></S> },
  { mt: "mt-[18px]", i: <S s={24} vb={24}><rect x="1" y="7" width="15" height="15" fill="#eee" stroke="#111" strokeWidth="1.4" /><rect x="4" y="9" width="5" height="11" fill="#a060a0" stroke="#111" /><path d="M16 13h5v8" stroke="#111" fill="none" /><path d="M12 6l2-3h5l1 1h3l-2 7h-8z" fill="#e8d050" stroke="#807000" /></S> },
  { mt: "mt-[17px]", i: <S s={24} vb={24}><circle cx="5" cy="6" r="4.5" fill="#3aa04a" /><circle cx="15" cy="6" r="4.5" fill="#1a3fd0" /><circle cx="5" cy="17" r="4.5" fill="#f0e020" /><circle cx="14" cy="15" r="4" fill="#d01010" /><path d="M14 13l4-2 5 2v8l-5 2-4-3z" fill="#fff" stroke="#111" /></S> },
];

const Rail = () => (
  <div className="flex w-[32px] shrink-0 flex-col items-center bg-[#dcdcdc] pl-[2px] border-r border-[#b6b6b6]">
    {railTop.map((r, i) => <div key={i} className={r.mt}>{r.i}</div>)}
    <div className="ml-[2px] mt-[5px] flex h-[45px] w-[30px] items-center justify-center self-end rounded-l-[2px] bg-white">
      <S s={26} vb={24}><Mill x={3} y={2} w={4} h={16} /><path d="M8 4h9M8 8h7M8 12h4" stroke="#2b6ad8" /><path d="M5 18v4M5 18h7" stroke="#1a1aa0" /><rect x="12" y="17" width="5" height="5" fill="#fff" stroke="#2b4ad8" /></S>
    </div>
    {railBottom.map((r, i) => <div key={i} className={r.mt}>{r.i}</div>)}
  </div>
);

const cols = ["名称", "刀轨", "刀具", "刀具号", "时间", "几何体", "余量", "底面余量", "切削深度", "进给", "速度", "过切检查"];
const grid = "grid grid-cols-[205px_37px_86px_49px_62px_50px_53px_60px_61px_81px_72px_54px]";

const Check = () => (
  <svg width="16" height="14" viewBox="0 0 16 14"><path d="M1 7L6 12 15 1" fill="none" stroke="#2fc84a" strokeWidth="1.7" /></svg>
);
const Cross = () => (
  <svg width="16" height="16" viewBox="0 0 16 16"><path d="M1 1L15 15M15 1L1 15" stroke="#444" strokeWidth="1" /></svg>
);
const Folder = () => (
  <svg width="15" height="14" viewBox="0 0 15 14" className="shrink-0"><path d="M.5 3V1H5l1 2h8.5v10H.5Z" fill="#f6e6a8" stroke="#8a7a30" /><path d="M7 4.5h5V6H8.5V8H12V9.5H8.5V10.5H12V12H7Z" fill="#1f2fd0" /></svg>
);
const OpIcon = () => (
  <svg width="17" height="16" viewBox="0 0 17 16" className="shrink-0"><path d="M1 14L3 4l7-2v10z" fill="#e8e8e8" stroke="#666" /><path d="M6 14L8 4h7l-2 10z" fill="#f4f4f4" stroke="#666" /><path d="M8 11L13 1l2 1-4 10z" fill="#4a5ec8" /><path d="M1 15h15" stroke="#666" /></svg>
);
const Excl = () => (
  <svg width="4" height="16" viewBox="0 0 4 16" className="shrink-0"><rect x="1" y="0" width="2" height="11" fill="#f5c840" /><rect x="1" y="13" width="2" height="2.5" fill="#f5c840" /></svg>
);
const NoSign = () => (
  <svg width="15" height="15" viewBox="0 0 15 15" className="shrink-0"><circle cx="7.5" cy="7.5" r="6" fill="#fff" stroke="#d81820" strokeWidth="2.2" /><path d="M3.2 11.8L11.8 3.2" stroke="#d81820" strokeWidth="2.2" /></svg>
);
const DotV = ({ x }: { x: number }) => <line x1={x} y1="0" x2={x} y2="20" stroke="#999" strokeDasharray="1 1" />;

const Num = ({ children, cls = "" }: { children?: ReactNode; cls?: string }) => (
  <div className={`flex items-center overflow-hidden pl-[5px] whitespace-nowrap border-r ${cls}`}>{children}</div>
);

type Row = { name: ReactNode; chk?: boolean; tool?: string; no?: string; time?: string; geo?: string; feed?: string; sp?: string; x?: boolean; sel?: boolean };

const rows: Row[] = [
  { name: <span className="pl-[3px]">NC_PROGRAM</span>, time: "00:00:33" },
  {
    name: <><svg width="19" height="20" className="shrink-0"><DotV x={9} /><line x1="9" y1="10" x2="19" y2="10" stroke="#999" strokeDasharray="1 1" /></svg><Folder /><span className="pl-[3px]">未用项</span></>,
    time: "00:00:00",
  },
  {
    name: <><svg width="23" height="20" className="shrink-0"><DotV x={9} /><rect x="5" y="6" width="9" height="8" fill="#fff" stroke="#bbb" /><line x1="7" y1="10" x2="12" y2="10" stroke="#222" /><line x1="14" y1="10" x2="22" y2="10" stroke="#999" strokeDasharray="1 1" /></svg><span className="ml-[2px]"><Excl /></span><span className="ml-[7px]"><Folder /></span><span className="pl-[4px]">PROGRAM</span></>,
    time: "00:00:17",
  },
  {
    sel: true,
    name: <><svg width="46" height="18" className="shrink-0"><line x1="9" y1="0" x2="9" y2="18" stroke="#999" strokeDasharray="1 1" /><line x1="28" y1="0" x2="28" y2="9" stroke="#999" strokeDasharray="1 1" /><line x1="28" y1="9" x2="45" y2="9" stroke="#999" strokeDasharray="1 1" /></svg><Excl /><span className="ml-[4px]"><OpIcon /></span><span className="flex h-full flex-1 items-center bg-[#8bc1d1] pl-[3px]">SEQUENTIAL_MILL_1</span></>,
    chk: true, tool: "D4", no: "0", time: "00:00:05", geo: "MCS_...", feed: "1200 mmpm", sp: "7500 rpm", x: true,
  },
  {
    name: <><svg width="19" height="20" className="shrink-0"><line x1="9" y1="0" x2="9" y2="10" stroke="#999" strokeDasharray="1 1" /><line x1="9" y1="10" x2="19" y2="10" stroke="#999" strokeDasharray="1 1" /></svg><NoSign /><OpIcon /><span className="pl-[3px]">SEQUENTIAL_MILL</span></>,
    chk: true, tool: "D4", no: "0", time: "00:00:16", geo: "MCS_...", feed: "250 mmpm", sp: "0 rpm", x: true,
  },
  ...Array.from({ length: 33 }, () => ({ name: null })),
];

const Nav = () => (
  <div className="flex w-[890px] shrink-0 flex-col bg-white">
    <div className="flex h-[29px] items-center pl-[10px] pr-[17px] pt-[1px] text-[12px] text-[#222]">
      <span>工序导航器 - 程序顺序</span>
      <span className="ml-auto mt-[2px] h-[12px] w-[13px] border border-[#111] border-t-[3px]" />
    </div>
    <div className="mx-[7px] flex h-[805px] w-[873px] flex-col overflow-hidden border border-[#d5d5d5]">
      <div className={`${grid} h-[21px] shrink-0 border-b-2 border-[#d8d8d8] bg-[#efefef] text-[12px] text-[#333]`}>
        {cols.map((c) => <div key={c} className="flex items-center overflow-hidden whitespace-nowrap border-r border-[#d8d8d8] pl-[6px] pt-[2px]">{c}</div>)}
      </div>
      <div className="relative h-[759px] shrink-0 overflow-hidden text-[12px] text-[#222]">
        {rows.map((r, i) => {
          const line = r.sel ? "border-white/70" : "border-[#eeeeee]";
          const row = r.sel ? "border-y border-dotted border-[#222]" : `border-b border-[#ececec] pt-px ${i % 2 === 1 ? "bg-[#fafafa]" : "bg-white"}`;
          const tail = r.sel ? "bg-[#8bc1d1]" : "";
          return (
            <div key={i} className={`${grid} h-[20px] ${row}`}>
              <div className="flex h-full items-center overflow-hidden whitespace-nowrap">{r.name}</div>
              <Num cls={`${line} ${tail}`}>{r.chk && <Check />}</Num>
              <Num cls={`${line} ${tail}`}>{r.tool}</Num>
              <Num cls={`${line} ${tail}`}>{r.no}</Num>
              <Num cls={`${line} ${tail}`}>{r.time}</Num>
              <Num cls={`${line} ${tail}`}>{r.geo}</Num>
              <Num cls={`${line} ${tail}`}></Num>
              <Num cls={`${line} ${tail}`}></Num>
              <Num cls={`${line} ${tail}`}></Num>
              <Num cls={`${line} ${tail}`}>{r.feed}</Num>
              <Num cls={`${line} ${tail}`}>{r.sp}</Num>
              <Num cls={`${line} ${tail}`}>{r.x && <Cross />}</Num>
            </div>
          );
        })}
        {/* column freeze line */}
        <span className="absolute inset-y-0 left-[205px] w-px bg-black" />
      </div>
      <div className="flex h-[16px] shrink-0 items-center bg-[#f2f2f2] px-[4px]">
        <svg width="10" height="10" viewBox="0 0 10 10"><path d="M7 1L3 5l4 4" fill="none" stroke="#555" strokeWidth="1.5" /></svg>
        <span className="mx-[4px] h-full flex-1 bg-[#cdcdcd]" />
        <svg width="10" height="10" viewBox="0 0 10 10"><path d="M3 1l4 4-4 4" fill="none" stroke="#555" strokeWidth="1.5" /></svg>
      </div>
    </div>
    <div className="mx-[7px] mt-[3px] h-[5px] w-[873px] border border-[#aaa] bg-[#e6e6e6]" />
  </div>
);

const DocTabs = () => (
  <div className="flex h-[23px] shrink-0 items-center bg-white text-[13px]">
    <span className="ml-[1px] pl-[4px]"><S s={16} vb={18}><Mill x={4} y={1} w={4} h={13} /><path d="M8 3h8M8 6h6M8 9h4" stroke="#666" /><Burst x={6} y={15} k={.5} /></S></span>
    <span className="ml-[5px] text-[12px] text-[#222]">活塞123.prt</span>
    <span className="ml-[6px]"><S s={13} vb={14}><path d="M3 3H11V13H3Z" fill="none" stroke="#333" /><path d="M5 1h4v3H5z" fill="#fff" stroke="#333" /><path d="M8 5l-3 3" stroke="#333" /></S></span>
    <div className="ml-[20px] flex h-full w-[94px] items-center bg-[#5ba3bb] pl-[4px] text-white">
      <S s={16} vb={18}><Mill x={4} y={1} w={4} h={13} /><path d="M8 3h8M8 6h6M8 9h4" stroke="#ddd" /><Burst x={6} y={15} k={.5} /></S>
      <span className="ml-[4px] text-[12px]">ct.prt</span>
      <span className="ml-[8px]"><S s={13} vb={14}><path d="M3 2H11V12H3Z" fill="#fff" /><path d="M5 5h4M5 8h2" stroke="#5ba3bb" /></S></span>
      <span className="ml-[3px]"><S s={10} vb={10}><path d="M1 1L9 9M9 1L1 9" stroke="#fff" strokeWidth="2" /></S></span>
    </div>
  </div>
);

// the part and its axes, drawn in the zoomed coordinates of the model (0.4336 px per unit)
const Model = () => (
  <svg viewBox="0 0 997 816" width="997" height="816" className="block font-['Liberation_Sans',sans-serif]">
    <defs>
      <linearGradient id="vbg" gradientUnits="userSpaceOnUse" x1="0" x2="0" y1="-226" y2="1656">
        <stop offset="0" stopColor="#1f2d55" /><stop offset=".12" stopColor="#2c4068" /><stop offset=".488" stopColor="#4a6a98" /><stop offset=".797" stopColor="#6490c4" /><stop offset="1" stopColor="#6a97c8" />
      </linearGradient>
      <linearGradient id="body" gradientUnits="userSpaceOnUse" x1="0" x2="0" y1="0" y2="1520">
        <stop offset=".39" stopColor="#ffffff" /><stop offset=".55" stopColor="#c8ffff" /><stop offset=".605" stopColor="#b8e8e6" /><stop offset=".67" stopColor="#a0c6c2" /><stop offset=".745" stopColor="#84a2a0" /><stop offset=".795" stopColor="#5f7472" /><stop offset=".855" stopColor="#3f4d4d" />
      </linearGradient>
      <linearGradient id="flA" gradientUnits="userSpaceOnUse" x1="0" x2="0" y1="100" y2="1450">
        <stop offset="0" stopColor="#7f9a9a" /><stop offset=".5" stopColor="#99b8b8" /><stop offset=".75" stopColor="#b8e4e2" /><stop offset="1" stopColor="#6e8585" />
      </linearGradient>
      <linearGradient id="flB" gradientUnits="userSpaceOnUse" x1="0" x2="0" y1="60" y2="1500">
        <stop offset="0" stopColor="#b4dede" /><stop offset=".5" stopColor="#8fafad" /><stop offset=".75" stopColor="#7d9a98" /><stop offset="1" stopColor="#566a68" />
      </linearGradient>
      <linearGradient id="flR" gradientUnits="userSpaceOnUse" x1="0" x2="0" y1="70" y2="1520">
        <stop offset="0" stopColor="#f0ffff" /><stop offset=".55" stopColor="#d0f6f6" /><stop offset=".75" stopColor="#a0c8c8" /><stop offset="1" stopColor="#708a8a" />
      </linearGradient>
      <linearGradient id="wallT" x1="0" x2="1" y1="0" y2="0">
        <stop offset="0" stopColor="#a6cccc" /><stop offset=".35" stopColor="#5a7070" /><stop offset=".5" stopColor="#3f4d4e" /><stop offset="1" stopColor="#84a4a4" />
      </linearGradient>
      <linearGradient id="wedge" x1="0" x2="0" y1="0" y2="1">
        <stop offset=".25" stopColor="#3f4d4e" /><stop offset="1" stopColor="#a4cccc" />
      </linearGradient>
      <linearGradient id="slot" gradientUnits="userSpaceOnUse" x1="0" x2="0" y1="560" y2="1160">
        <stop offset="0" stopColor="#ffffff" /><stop offset=".4" stopColor="#c8ffff" /><stop offset=".65" stopColor="#f4ffff" /><stop offset="1" stopColor="#ffffff" />
      </linearGradient>
      <linearGradient id="wallB" x1="0" x2="1" y1="0" y2="0">
        <stop offset="0" stopColor="#3f4d4e" /><stop offset=".45" stopColor="#3f4d4e" /><stop offset="1" stopColor="#8cacac" />
      </linearGradient>
      <linearGradient id="lip" x1="0" x2="1" y1="0" y2="0">
        <stop offset=".55" stopColor="#ffffff" /><stop offset=".85" stopColor="#c8ffff" /><stop offset="1" stopColor="#88a8a8" />
      </linearGradient>
    </defs>
    <g transform="translate(117 98) scale(.4336)">
      <rect x="-300" y="-226" width="2400" height="1882" fill="url(#vbg)" />
      {/* main barrel */}
      <path d="M110 60L440 62C500 85 590 100 650 100C720 100 800 85 845 67L1440 73L1470 300L1470 1200L1423 1518L950 1513C925 1512 905 1480 895 1455C860 1445 800 1437 740 1437C680 1437 620 1455 575 1485C565 1495 560 1505 540 1508L95 1503Z" fill="url(#body)" />
      <path d="M895 1455C930 1465 965 1480 968 1498C965 1512 945 1515 930 1510C915 1495 905 1475 895 1455Z" fill="#7a9a98" />
      {/* flanges */}
      <path d="M80 90L110 60C126 400 128 900 120 1100C115 1300 105 1420 95 1503L62 1470C55 1300 48 1100 50 900C52 500 64 300 80 90Z" fill="url(#flB)" stroke="#2e3838" strokeWidth="1.5" />
      <path d="M80 92C66 300 52 600 50 900C48 1200 56 1350 65 1472C72 1440 88 1300 90 1100C94 800 96 400 90 120Z" fill="url(#flA)" stroke="#2e3838" strokeWidth="1.5" />
      <path d="M78 150C60 400 55 900 60 1300" fill="none" stroke="#3a4646" strokeWidth="1.5" />
      <path d="M86 846L84 1137" stroke="#f6ffff" strokeWidth="5" />
      <path d="M1440 73L1470 105C1480 400 1484 800 1478 1150C1472 1350 1455 1480 1450 1490L1423 1518C1440 1300 1458 800 1450 300Z" fill="url(#flR)" />
      <path d="M1440 73L1450 300C1458 800 1440 1300 1423 1518" fill="none" stroke="#3f4d4e" strokeWidth="1.2" opacity=".5" />
      {/* slot between the holes */}
      <path d="M552 565L488 918L805 1020L835 1150L848 1170L958 555L945 640Z" fill="url(#slot)" />
      <path d="M590 320L550 570M550 570L488 918M488 918L450 1140" stroke="#3a4646" strokeWidth="2" fill="none" />
      <path d="M992 365L958 555L848 1165" stroke="#3a4646" strokeWidth="2" fill="none" />
      {/* top hole */}
      <path d="M555 600C600 720 680 787 750 787C840 787 920 720 945 640L958 555L550 570Z" fill="url(#lip)" stroke="#3a4646" strokeWidth="1.4" />
      <path d="M590 345C640 280 720 265 790 265C840 265 880 275 903 285L958 555C950 650 860 747 750 747C650 747 550 680 550 570Z" fill="url(#vbg)" stroke="#2e3838" strokeWidth="1.5" />
      <path d="M590 345L590 320C610 230 690 185 780 185C880 185 990 230 997 330L992 365C975 330 940 300 903 285C880 275 840 265 790 265C720 265 640 280 590 345Z" fill="url(#wallT)" stroke="#2e3838" strokeWidth="1.2" />
      <path d="M903 285C940 300 975 330 992 365L958 555Z" fill="url(#wedge)" stroke="#2e3838" strokeWidth="1" />
      {/* bottom hole */}
      <path d="M478 985C510 960 550 940 600 940C690 940 760 990 790 1040C810 1080 820 1130 825 1180C800 1230 730 1258 640 1258C570 1258 490 1220 450 1140Z" fill="url(#vbg)" stroke="#2e3838" strokeWidth="1.4" />
      <path d="M490 918C530 895 570 882 615 882C700 882 780 940 805 1020L835 1150L825 1180C820 1130 810 1080 790 1040C760 990 690 940 600 940C550 940 510 960 478 985Z" fill="url(#wallB)" stroke="#2e3838" strokeWidth="1.2" />
      <path d="M448 1145C450 1240 540 1320 650 1320C740 1320 840 1270 850 1180L838 1168C800 1230 730 1258 640 1258C570 1258 490 1220 450 1140Z" fill="url(#lip)" stroke="#2e3838" strokeWidth="1.2" />
      {/* tool path */}
      <path d="M705 420C720 385 755 367 790 367C840 367 880 400 875 440L725 1095C705 1130 675 1148 640 1148C590 1148 550 1110 558 1070Z" fill="none" stroke="#20e4ec" strokeWidth="2.4" />
      <path d="M703 422L760 433" stroke="#20e4ec" strokeWidth="4" />
    </g>
    <path d="M462 0L446.5 285.7" stroke="#f5c518" strokeWidth="1" />
    <path d="M0 32.5H875" stroke="#8a6a7a" strokeWidth="1" opacity=".7" />
    <path d="M905.5 64V250" stroke="#b04060" strokeWidth="1" />
    <path d="M905.5 250V481" stroke="#b03a90" strokeWidth="1" />
    <path d="M905.5 481V816" stroke="#e8f0d8" strokeWidth="1" />
    {/* work coordinate triad */}
    <path d="M97.5 435V365" stroke="#0a48e8" strokeWidth="2" />
    <polygon points="97,350 102,368 92,368" fill="#0a48e8" />
    <polygon points="99,400 103,420 99,436 95,420" fill="#10208c" />
    <path d="M99 400L97 385" stroke="#30c030" strokeWidth="2" />
    <path d="M98 435L94 488" stroke="#206a20" strokeWidth="2" />
    <polygon points="95,495 90,482 100,482" fill="#206a20" />
    <path d="M98 435H150" stroke="#d83030" strokeWidth="2" />
    <polygon points="129,432 150,436 129,440" fill="#d83030" />
    <path d="M150 436.5H190" stroke="#f0b8b8" strokeWidth="1.4" />
    <polygon points="182,432 202,437 182,441" fill="#f0a0a0" />
    <g fontSize="12">
      <text x="101" y="350" fill="#0a48e8">ZM</text>
      <text x="102" y="388" fill="#2a9a2a">YC</text>
      <text x="82" y="403" fill="#0a48e8">ZC</text>
      <text x="140" y="453" fill="#d84040">XC</text>
      <text x="187" y="453" fill="#d84040">XM</text>
      <text x="98" y="507" fill="#2a9a2a">YM</text>
    </g>
    {/* absolute triad */}
    <rect x="65" y="712" width="26" height="36" fill="#b8c0cc" stroke="#b080a8" />
    <path d="M65 724H91M65 733H91" stroke="#b080a8" />
    <path d="M64 748V715" stroke="#30a030" strokeWidth="1.5" />
    <path d="M65 748V728" stroke="#10208c" strokeWidth="2.5" />
    <path d="M65 749H104" stroke="#d83030" strokeWidth="1.5" />
    <polygon points="107,750 96,746 96,754" fill="#d83030" />
    <circle cx="64" cy="749" r="4" fill="#ddd" />
    <g fontSize="10">
      <text x="60" y="714" fill="#2a9a2a">Y</text>
      <text x="62" y="724" fill="#0a48e8">Z</text>
      <text x="109" y="754" fill="#d84040">X</text>
    </g>
  </svg>
);

const StatusBar = () => (
  <div className="flex h-[22px] shrink-0 items-center border-t-2 border-[#b4b4b4] bg-white">
    <span className="ml-[925px] text-[11px] font-medium text-[#111]">全部 1</span>
    <span className="ml-auto mr-[53px]"><S s={17} vb={17}><path d="M1 5V1H5M12 1H16V5M16 12V16H12M5 16H1V12" fill="none" stroke="#333" /></S></span>
  </div>
);

const TaskItem = ({ w, label, icon, active, ml }: { w: string; label: string; icon: ReactNode; active?: boolean; ml: string }) => (
  <div className={`relative flex h-full ${w} ${ml} shrink-0 items-center pb-[1px] text-[12px] text-white ${active ? "bg-[#68686a]" : ""}`}>
    {icon}
    <span className="ml-[3px] whitespace-nowrap">{label}</span>
    <span className="absolute inset-x-0 bottom-0 h-[2px] bg-[#6cb2e6]" />
  </div>
);

const T = ({ children }: { children: ReactNode }) => <span className="flex w-[24px] shrink-0 items-center justify-center">{children}</span>;

const TaskBar = () => (
  <div className="flex h-[40px] shrink-0 items-center bg-[#3b3b3d]">
    <span className="ml-[16px]"><S s={17} vb={17}><path d="M0 2.5L7 1.5V8H0ZM8 1.4L17 0V8H8ZM0 9H7V15.5L0 14.5ZM8 9H17V17L8 15.6Z" fill="#fff" /></S></span>
    <TaskItem ml="ml-[22px]" w="w-[152px]" label="E:\123\9.25\sizho..." icon={<span className="ml-[6px]"><S s={26} vb={24}><path d="M3 17L7 1h3l2 6 5-6h3l-2 16h-4l1-8-4 5-2-4-2 7Z" fill="#e02030" /><text x="3" y="23.5" fontSize="6.5" fill="#fff">2021</text></S></span>} />
    <TaskItem ml="ml-[5px]" w="w-[160px]" active label="NX - 加工" icon={<span className="ml-[8px]"><S s={26} vb={24}><path d="M4 2L12 14 20 3V10L12 22 4 10Z" fill="#1f6ad8" /><path d="M8 1h6l-3 8z" fill="#d83040" /><path d="M4 16Q12 26 22 14Q14 20 8 13Z" fill="#f0a010" /></S></span>} />
    <TaskItem ml="ml-[5px]" w="w-[151px]" label="E:\" icon={<span className="ml-[8px]"><S s={24} vb={24}><path d="M4 14L16 8l5 3-11 6z" fill="#eee" /><path d="M4 14v3l6 3 11-6v-3L10 17Z" fill="#999" /></S></span>} />
    <TaskItem ml="ml-[9px]" w="w-[152px]" label="E:\123\6.16" icon={<span className="ml-[6px]"><S s={24} vb={24}><path d="M6 2L15 1V21L10 24L6 23Z" fill="#f4cf66" /><path d="M6 2L12 3V22L6 23Z" fill="#e8b83a" /></S></span>} />
    <div className="ml-auto flex items-center">
      <T><S><path d="M1 9L9 4v5H5v7H1zM10 3h7L14 11h-4z" fill="#1a8ae0" /></S></T>
      <T><S><path d="M5 2l9 0-2 13-6 1z" fill="#e8e8e8" /><path d="M6 3L12 14 7 15Z" fill="#d83020" /><circle cx="13" cy="13" r="2" fill="#2060d0" /></S></T>
      <T><S><circle cx="9" cy="9" r="8" fill="#1a7ae0" /><path d="M6 15Q8 4 13 3Q11 5 10 7h2L11 9H9.5L8 15Z" fill="#fff" /></S></T>
      <T><S><path d="M9 1L16 3V9Q16 15 9 17Q2 15 2 9V3Z" fill="#111" stroke="#fff" /><path d="M9 1V17H2V9ZM9 9H16V3L9 1" fill="#fff" opacity=".9" /><circle cx="13" cy="13" r="4" fill="#109040" /></S></T>
      <T><S><circle cx="9" cy="9" r="8" fill="#e0d020" stroke="#2a8a30" strokeWidth="1.6" /><path d="M9 4V14M4 9H14" stroke="#2a8a30" strokeWidth="2.4" /></S></T>
      <T><S><path d="M9 1L16 3V9Q16 15 9 17Q2 15 2 9V3Z" fill="#d0d8c8" stroke="#8aa080" /><path d="M10 3L6 10h3l-1 5 5-7h-3z" fill="#50b030" /></S></T>
      <T><S><path d="M2 14L5 3h2l2 4 3-4h2l-1 11h-2l.6-6-2.6 4-2-3-1 5Z" fill="#d81830" /><circle cx="14" cy="14" r="3" fill="#e0b040" /></S></T>
      <T><S><path d="M2 14L5 3h2l2 4 3-4h2l-1 11h-2l.6-6-2.6 4-2-3-1 5Z" fill="#d81830" /><rect x="12" y="11" width="5" height="6" fill="#ccc" /></S></T>
      <T><S><rect x="1" y="1" width="16" height="16" rx="3" fill="#fff" /><circle cx="9" cy="6" r="3" fill="none" stroke="#2a8af0" strokeWidth="1.4" /><circle cx="6" cy="11" r="3" fill="none" stroke="#30b0d0" strokeWidth="1.4" /><circle cx="12" cy="11" r="3" fill="none" stroke="#7a60e0" strokeWidth="1.4" /></S></T>
      <T><S><rect x="1" y="2" width="16" height="14" fill="#fff" /><rect x="3" y="6" width="12" height="8" fill="#f0a020" /></S></T>
      <T><S><path d="M9 1L16 3V9Q16 15 9 17Q2 15 2 9V3Z" fill="#f09010" /><path d="M9 4Q12 8 10 10Q12 10 11 13Q9 15 7 13Q6 10 8 9Q9 7 9 4Z" fill="#fff" /></S></T>
      <T><span className="flex h-[20px] w-[20px] items-center justify-center bg-[#111]"><S s={14}><path d="M2 9Q8 2 15 8Q9 14 4 9M6 9Q9 6 12 8.5" fill="none" stroke="#76b900" strokeWidth="1.4" /></S></span></T>
      <T><S><rect x="1" y="2" width="5" height="8" fill="none" stroke="#4aa8e8" /><rect x="5" y="5" width="12" height="8" fill="none" stroke="#fff" /><path d="M11 13v3M7 16h8" stroke="#fff" /></S></T>
      <T><S><ellipse cx="9" cy="8" rx="5" ry="6" fill="#111" /><ellipse cx="9" cy="10" rx="3.4" ry="4" fill="#fff" /><path d="M5 11h8l-2 2H6z" fill="#e01010" /><path d="M4 16h4M10 16h4" stroke="#f0b010" strokeWidth="2" /></S></T>
      <T><S><path d="M2 7H5L9 3V15L5 11H2Z" fill="none" stroke="#fff" /><path d="M11 6q2 3 0 6M13 4q4 5 0 10" fill="none" stroke="#fff" /></S></T>
      <span className="flex w-[25px] justify-center text-[14px] text-white">A</span>
      <span className="ml-[3px] flex w-[24px] justify-center"><S><path d="M9 1L16 2L14 8L10 7L14 9L13 15L7 17L2 15L2 11L8 13L10 12L3 9L3 3Z" fill="#f0551c" /></S></span>
      <div className="ml-[5px] flex w-[86px] flex-col items-center pt-[1px] text-[12px] leading-[15px] whitespace-nowrap text-[#e8e8e8]">
        <span>20:03 周二</span><span>2021/10/5</span>
      </div>
      <div className="relative ml-[6px] mr-[7px] flex h-[22px] w-[22px] items-center">
        <S s={18}><path d="M2 1H16V12H10V17H2Z" fill="#eee" /><path d="M4 5h10M4 8h10M4 11h5" stroke="#888" /></S>
        <span className="absolute right-[-1px] bottom-[-2px] flex h-[13px] w-[12px] items-center justify-center bg-[#e01010] text-[10px] text-white">4</span>
      </div>
    </div>
  </div>
);

const Ime = () => (
  <div className="absolute left-[1300px] top-[1012px] flex items-center">
    <span className="z-10 flex h-[28px] w-[28px] rotate-[-8deg] items-center justify-center rounded-[5px] bg-[#f2581e] text-[26px] font-bold leading-none text-white">S</span>
    <div className="ml-[1px] flex h-[25px] w-[124px] items-center rounded-r-[3px] border border-[#cfdbe8] bg-white pl-[8px] text-[#1a6fd8]">
      <span className="w-[24px] text-[19px] leading-none">A</span>
      <span className="w-[24px] pl-[3px] text-[14px] leading-none font-bold">•,</span>
      <span className="w-[24px]"><S s={18}><rect x="6" y="1" width="6" height="10" rx="3" fill="#1a6fd8" /><path d="M3 8q0 6 6 6t6-6M9 14v3" fill="none" stroke="#1a6fd8" /></S></span>
      <span className="w-[24px] pl-[2px]"><S s={17}><rect x="1" y="3" width="16" height="12" rx="2" fill="#1a6fd8" /><path d="M3 7h12M3 10h12M5 13h8" stroke="#fff" strokeDasharray="2 1" /></S></span>
      <span className="flex h-full w-[24px] items-center justify-center bg-[#f2eefa]"><S s={16}><rect x="1" y="1" width="6.5" height="6.5" rx="1.5" fill="#7a6ae0" /><rect x="9.5" y="1" width="6.5" height="6.5" rx="1.5" fill="#7a6ae0" /><rect x="1" y="9.5" width="6.5" height="6.5" rx="1.5" fill="#5a4ac8" /><rect x="9.5" y="9.5" width="6.5" height="6.5" rx="1.5" fill="#5a4ac8" /></S></span>
    </div>
  </div>
);

const Watermark = () => (
  <div className="pointer-events-none absolute left-[1638px] top-[985px] flex">
    <svg width="72" height="76" viewBox="0 0 72 76">
      <polygon points="36,1 71,21 71,57 36,75 1,57 1,21" fill="#3ea4e6" opacity=".55" />
      <polygon points="36,20 55,31 55,52 36,62 17,52 17,31" fill="#bfe3f8" opacity=".6" />
      <path d="M17 31L36 42 55 31M36 42V62" stroke="#2e89c6" strokeWidth="2" fill="none" opacity=".6" />
    </svg>
    <div className="ml-[8px] flex flex-col pt-[5px] font-bold text-white/40">
      <span className="text-[40px] leading-[44px] whitespace-nowrap">3D世界网</span>
      <span className="mt-[2px] text-[15px] leading-[18px] font-normal tracking-[2.4px] whitespace-nowrap text-white/40">WWW.3DSJW.COM</span>
    </div>
  </div>
);

export default function App() {
  return (
    <div className="relative flex h-[1080px] w-[1920px] flex-col overflow-hidden bg-white font-['Noto_Sans','Noto_Sans_CJK_SC',sans-serif] text-[#222]">
      <TitleBar />
      <TabBar />
      <Ribbon />
      <ToolBar />
      <div className="flex h-[839px] shrink-0">
        <Rail />
        <Nav />
        <div className="flex w-[998px] flex-col border-l border-[#9a9a9a]">
          <DocTabs />
          <Model />
        </div>
      </div>
      <StatusBar />
      <TaskBar />
      <Ime />
      <Watermark />
    </div>
  );
}
